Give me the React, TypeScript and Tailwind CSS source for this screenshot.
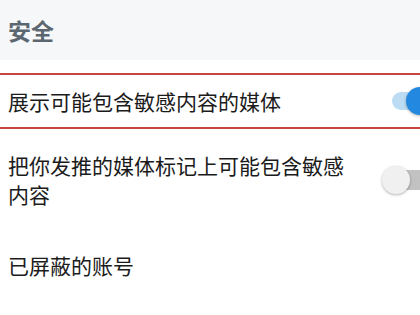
const font = { fontFamily: '"Noto Sans CJK SC", "Noto Sans", sans-serif' }

const Switch = ({ on }: { on: boolean }) => {
  return (
    <div className="relative -mr-[20px] h-[28px] w-[58px] shrink-0">
      <div
        className={
          on
            ? 'absolute left-[10px] top-[5px] h-[18px] w-[48px] rounded-full bg-[#bcdcf4]'
            : 'absolute left-[10px] top-[4px] h-[20px] w-[48px] rounded-full bg-[#c2c2c2]'
        }
      />
      <div
        className={
          on
            ? 'absolute left-[24px] top-0 h-[28px] w-[28px] rounded-full bg-[#2389e0] shadow-[0_1px_3px_rgba(0,0,0,0.3)]'
            : 'absolute left-0 top-0 h-[28px] w-[28px] rounded-full bg-[#f0f0f0] shadow-[0_1px_3px_rgba(0,0,0,0.3)]'
        }
      />
    </div>
  )
}

export default function App() {
  return (
    <div className="h-[315px] w-[420px] overflow-hidden bg-white" style={font}>
      {/* section header */}
      <div className="flex h-[60px] items-center bg-[#f5f7f9] px-2">
        <span className="text-[23px] font-bold text-[#5b6670]">安全</span>
      </div>

      <div className="mt-[13px] flex h-[56px] items-center border-y-2 border-[#c9463f] pl-2">
        <span className="text-[21px] leading-[29px] text-[#1b1b1b]">
          展示可能包含敏感内容的媒体
        </span>
        <div className="ml-auto">
          <Switch on />
        </div>
      </div>

      <div className="flex h-[102px] items-center pl-2">
        <span className="w-[340px] text-[21px] leading-[29px] text-[#1b1b1b]">
          把你发推的媒体标记上可能包含敏感内容
        </span>
        <div className="ml-auto">
          <Switch on={false} />
        </div>
      </div>

      <div className="flex h-[68px] items-center pl-2">
        <span className="text-[21px] leading-[29px] text-[#1b1b1b]">已屏蔽的账号</span>
      </div>
    </div>
  )
}
